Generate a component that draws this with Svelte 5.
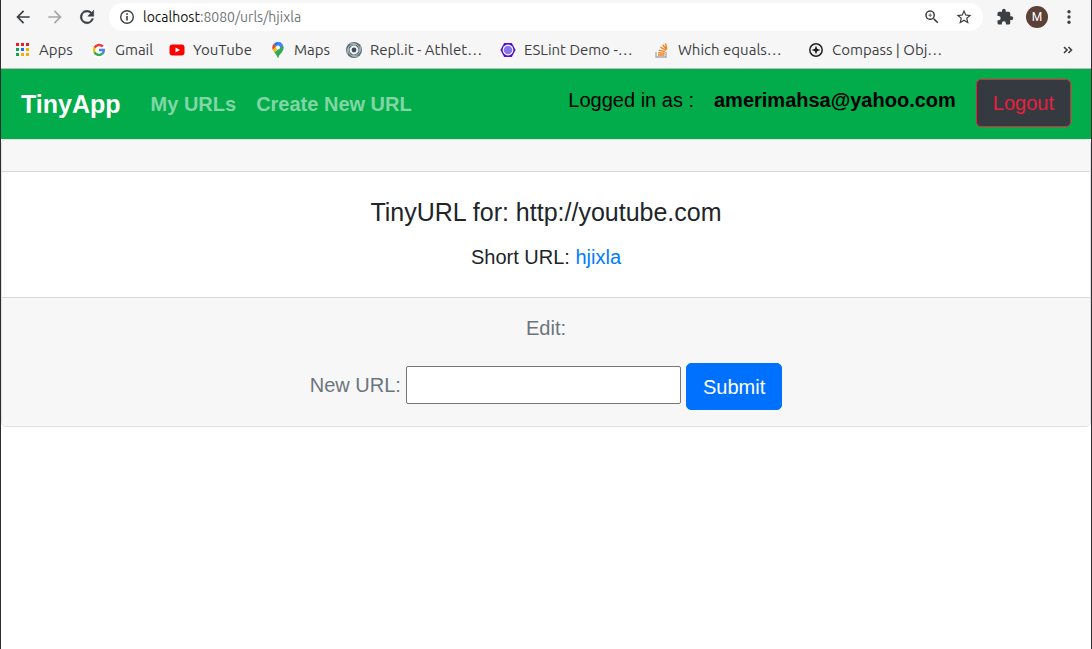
<script>
  let newUrl = $state('');
  let address = 'hjixla';

  const bookmarks = [
    { icon: 'apps', label: 'Apps', width: 76 },
    { icon: 'google', label: 'Gmail', width: 78 },
    { icon: 'youtube', label: 'YouTube', width: 101 },
    { icon: 'maps', label: 'Maps', width: 76 },
    { icon: 'replit', label: 'Repl.it - Athlet…', width: 154 },
    { icon: 'eslint', label: 'ESLint Demo -…', width: 154 },
    { icon: 'stack', label: 'Which equals…', width: 154 },
    { icon: 'compass', label: 'Compass | Obj…', width: 154 }
  ];

  const appColors = ['#ea1c2c', '#ea1c2c', '#ea1c2c', '#12a350', '#1a73e8', '#f9ab00', '#12a350', '#f9ab00', '#f9ab00'];
</script>

{#snippet favicon(name)}
  <svg class="favicon" viewBox="0 0 16 16" aria-hidden="true">
    {#if name === 'apps'}
      {#each appColors as color, i}
        <rect x={1 + (i % 3) * 5} y={1 + Math.floor(i / 3) * 5} width="3" height="3" fill={color} />
      {/each}
    {:else if name === 'google'}
      <circle cx="8" cy="8" r="8" fill="#fff" />
      <g fill="none" stroke-width="2.5">
        <path d="M11.8 4.6A5 5 0 0 0 3.5 5.8" stroke="#ea4335" />
        <path d="M3.5 5.8a5 5 0 0 0 0 4.4" stroke="#fbbc05" />
        <path d="M3.5 10.2a5 5 0 0 0 7.7 1.6" stroke="#34a853" />
        <path d="M11.2 11.8A5 5 0 0 0 12.8 8H8" stroke="#4285f4" />
      </g>
    {:else if name === 'youtube'}
      <rect x="0.5" y="2.5" width="15" height="11" rx="3" fill="#f00" />
      <path d="M6.500 5.500v5L11 8z" fill="#fff" />
    {:else if name === 'maps'}
      <path d="M8 0a5.6 5.6 0 0 0-4.3 2L8 6l3.2-5A5.6 5.6 0 0 0 8 0z" fill="#1a73e8" />
      <path d="M3.7 2a5.6 5.6 0 0 0-1 5.8L8 6z" fill="#ea4335" />
      <path d="M2.7 7.8c.4 1 1 1.7 1.7 2.6L10 4 6 4z" fill="#fbbc04" />
      <path d="M4.4 10.4C6 12.2 7 13.4 7.4 15.3c.2.9 1 .9 1.2 0 .6-3.3 5-5 5-9.7 0-1-.2-1.800-.6-2.500z" fill="#34a853" />
      <path d="M8 0a5.6 5.6 0 0 1 5 3.100L9.500 7 6 4z" fill="#4285f4" />
      <circle cx="8" cy="5.600" r="2" fill="#fff" />
    {:else if name === 'replit'}
      <circle cx="8" cy="8" r="8" fill="#5c6f78" />
      <circle cx="8" cy="8" r="4.400" fill="#f2f4f4" />
      <g fill="none" stroke="#c3ccd0" stroke-width="0.800">
        <path d="M2 12C-.5 6 5 1 10 3" />
        <path d="M4 2c6-2.500 11 3 9 8" />
        <path d="M14 4c2.500 6-3 11-8 9" />
        <path d="M12 14c-6 2.500-11-3-9-8" />
      </g>
      <circle cx="8" cy="8" r="2.400" fill="#424c52" />
    {:else if name === 'eslint'}
      <path d="M4.200 1h7.600l3.800 7-3.800 7H4.200L.4 8z" fill="#5710ce" />
      <circle cx="8" cy="8" r="5.400" fill="#fff" />
      <circle cx="8" cy="8" r="4.300" fill="#8579e8" />
    {:else if name === 'stack'}
      <path d="M2 10v5h10v-5" fill="none" stroke="#a6a8aa" stroke-width="1.300" />
      <path d="M4 13h6.500M4.100 10.800l6.500.6M4.800 8.100l6.200 1.800M6.400 5.200l5.500 3.300M8.700 2.800l4 5M11.500 1.400l1.300 6" stroke="#f48024" stroke-width="1.400" />
    {:else}
      <circle cx="8" cy="8" r="6.200" fill="none" stroke="#222" stroke-width="1.500" />
      <path d="M8 3.500l1.200 3.300L12.500 8 9.200 9.200 8 12.500 6.800 9.200 3.500 8l3.300-1.200z" fill="#222" />
    {/if}
  </svg>
{/snippet}

<div class="window">
  <header class="browser">
    <div class="toolbar">
      <button class="tool" aria-label="Back">
        <svg viewBox="0 0 24 24"><path d="M20 11H7.800l5.600-5.600L12 4l-8 8 8 8 1.400-1.400L7.800 13H20z" /></svg>
      </button>
      <button class="tool muted" aria-label="Forward">
        <svg viewBox="0 0 24 24"><path d="M4 11h12.200l-5.600-5.600L12 4l8 8-8 8-1.400-1.400 5.600-5.600H4z" /></svg>
      </button>
      <button class="tool" aria-label="Reload">
        <svg viewBox="0 0 24 24"><path d="M17.650 6.350A8 8 0 1 0 19.730 14h-2.080A6 6 0 1 1 12 6c1.660 0 3.140.69 4.220 1.780L13 11h7V4z" stroke="currentColor" stroke-width="0.700" /></svg>
      </button>
      <div class="address">
        <svg class="info" viewBox="0 0 16 16" aria-hidden="true">
          <circle cx="8" cy="8" r="6.300" fill="none" stroke="currentColor" stroke-width="1.400" />
          <path d="M7.200 7h1.600v4.500H7.200zM7.200 4.300h1.600v1.600H7.200z" />
        </svg>
        <span class="url"><b>localhost</b>:8080/urls/{address}</span>
        <button class="tool small" aria-label="Zoom">
          <svg viewBox="0 0 24 24"><path d="M15.500 14h-.79l-.28-.27A6.500 6.500 0 1 0 13.730 14.430l.27.28v.79l5 4.990L20.490 19zm-6 0a4.500 4.500 0 1 1 0-9 4.500 4.500 0 0 1 0 9zM12 9h-2V7H9v2H7v1h2v2h1v-2h2z" /></svg>
        </button>
        <button class="tool small" aria-label="Bookmark this page">
          <svg viewBox="0 0 24 24"><path d="M22 9.240l-7.190-.62L12 2 9.190 8.630 2 9.240l5.460 4.730L5.820 21 12 17.270 18.180 21l-1.630-7.030zM12 15.400l-3.760 2.270 1-4.280-3.320-2.880 4.380-.38L12 6.100l1.710 4.040 4.380.38-3.320 2.880 1 4.280z" /></svg>
        </button>
      </div>
      <button class="tool extensions" aria-label="Extensions">
        <svg viewBox="0 0 24 24"><path d="M20.500 11H19V7a2 2 0 0 0-2-2h-4V3.500a2.500 2.500 0 0 0-5 0V5H4a2 2 0 0 0-2 2v3.800h1.500a2.700 2.700 0 0 1 0 5.400H2V20a2 2 0 0 0 2 2h3.800v-1.500a2.700 2.700 0 0 1 5.400 0V22H17a2 2 0 0 0 2-2v-4h1.500a2.500 2.500 0 0 0 0-5z" /></svg>
      </button>
      <button class="avatar" aria-label="Profile">M</button>
      <button class="tool menu" aria-label="Menu">
        <svg viewBox="0 0 24 24"><circle cx="12" cy="5" r="2.200" /><circle cx="12" cy="12" r="2.200" /><circle cx="12" cy="19" r="2.200" /></svg>
      </button>
    </div>
    <nav class="bookmarks" aria-label="Bookmarks">
      {#each bookmarks as item}
        <a href="#{item.icon}" style:width="{item.width}px">{@render favicon(item.icon)}<span>{item.label}</span></a>
      {/each}
      <button class="more" aria-label="More bookmarks">
        <svg viewBox="0 0 10 8"><path d="M1 1l3 3-3 3M5.500 1l3 3-3 3" fill="none" stroke="currentColor" stroke-width="1.600" /></svg>
      </button>
    </nav>
  </header>

  <nav class="navbar" aria-label="Main">
    <a class="brand" href="#home">TinyApp</a>
    <a class="link" href="#urls">My URLs</a>
    <a class="link" href="#new">Create New URL</a>
    <div class="session">
      <span>Logged in as :</span>
      <strong>amerimahsa@yahoo.com</strong>
    </div>
    <button class="btn logout">Logout</button>
  </nav>

  <main class="card">
    <div class="card-header"></div>
    <div class="card-body">
      <h1>TinyURL for: http://youtube.com</h1>
      <p>Short URL: <a href="#short">{address}</a></p>
    </div>
    <div class="card-footer">
      <p>Edit:</p>
      <form onsubmit={(event) => event.preventDefault()}>
        <label for="new-url">New URL:</label>
        <input id="new-url" type="text" bind:value={newUrl} />
        <button class="btn submit">Submit</button>
      </form>
    </div>
  </main>
</div>

<style>
  :global(body) {
    margin: 0;
    background: #fff;
  }
  .window {
    box-sizing: border-box;
    min-height: 100vh;
    border: solid #2d2c2f;
    border-width: 0 1px;
    color: #212529;
    font: 20px/30px "Liberation Sans", Arial, sans-serif;
  }
  button {
    border: 0;
    padding: 0;
    background: none;
    color: inherit;
    font: inherit;
    cursor: pointer;
  }
  a {
    color: #007bff;
    text-decoration: none;
  }

  .browser {
    background: #f6f6f6;
    border-bottom: 1px solid #b9b9b9;
    color: #3c4043;
    font: 15px/20px Ubuntu, "Noto Sans", sans-serif;
  }
  .toolbar {
    display: flex;
    align-items: center;
    height: 34px;
    padding: 0 13px 0 12px;
  }
  .tool {
    display: flex;
    flex: none;
    width: 20px;
    height: 20px;
    margin-right: 12px;
  }
  .tool svg {
    width: 100%;
    fill: currentColor;
  }
  .muted {
    color: #a5a6a8;
  }
  .address {
    display: flex;
    flex: 1;
    align-items: center;
    height: 28px;
    padding: 0 10px;
    border-radius: 14px;
    background: #fff;
  }
  .info {
    width: 16px;
    height: 16px;
    margin-right: 8px;
    fill: currentColor;
  }
  .url {
    flex: 1;
    color: #70757a;
    font-size: 14px;
  }
  .url b {
    color: #111;
    font-weight: 400;
  }
  .small {
    width: 18px;
    height: 18px;
    margin: 0 0 0 14px;
  }
  .extensions {
    width: 18px;
    height: 18px;
    margin: 0 12px 0 13px;
  }
  .avatar {
    width: 22px;
    height: 22px;
    border-radius: 50%;
    background: #5d4037;
    color: #fff;
    font: 12px/22px Roboto, sans-serif;
  }
  .menu {
    width: 18px;
    height: 18px;
    margin: 0 0 0 12px;
  }
  .bookmarks {
    display: flex;
    align-items: center;
    height: 32px;
    padding: 0 18px 2px 14px;
  }
  .bookmarks a {
    display: flex;
    flex: none;
    align-items: center;
    gap: 8px;
    color: inherit;
    white-space: nowrap;
  }
  .favicon {
    flex: none;
    width: 16px;
    height: 16px;
  }
  .more {
    display: flex;
    width: 10px;
    margin-left: auto;
  }
  .more svg {
    width: 10px;
  }

  .navbar {
    display: flex;
    align-items: center;
    box-sizing: border-box;
    height: 70px;
    padding: 0 20px;
    background: #02ac4a;
  }
  .brand {
    margin-right: 30px;
    color: #fff;
    font-size: 25px;
    font-weight: 700;
  }
  .link {
    margin-right: 20px;
    color: #81d6a5;
    font-weight: 700;
  }
  .session {
    display: flex;
    gap: 20px;
    margin: 0 20px 8px auto;
    color: #000;
  }
  .btn {
    box-sizing: border-box;
    height: 48px;
    padding: 0 16px;
    border: 1px solid;
    border-radius: 5px;
  }
  .logout {
    margin-bottom: 2px;
    border-color: #e9203f;
    background: #343a40;
    color: #e9203f;
  }

  .card {
    border: 1px solid #dfdfdf;
    border-radius: 5px;
    overflow: hidden;
    text-align: center;
  }
  .card-header {
    height: 31px;
    border-bottom: 1px solid #d8d8d8;
    background: #f7f7f7;
  }
  .card-body {
    padding: 25px;
  }
  h1 {
    margin: 0 0 15px;
    font-size: 25px;
    font-weight: 400;
    line-height: 30px;
  }
  p {
    margin: 0;
  }
  .card-footer {
    padding: 15px 25px 16px;
    border-top: 1px solid #d8d8d8;
    background: #f7f7f7;
    color: #6c757d;
  }
  form {
    display: flex;
    align-items: center;
    justify-content: center;
    gap: 5px;
    margin-top: 20px;
  }
  label,
  input {
    margin-bottom: 3px;
  }
  input {
    box-sizing: border-box;
    width: 275px;
    min-width: 0;
    height: 38px;
    padding: 0 4px;
    border: 1px solid #767676;
    border-radius: 2px;
    background: #fff;
    font: inherit;
  }
  .submit {
    height: 47px;
    border-color: #0071ff;
    background: #0071ff;
    color: #fff;
  }
</style>
